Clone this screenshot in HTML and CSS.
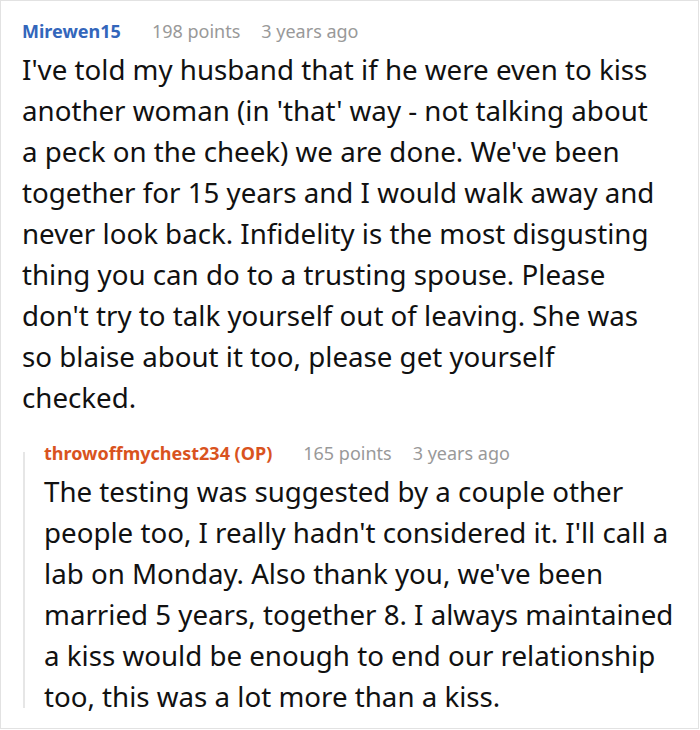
FILE: index.html
```html
<!DOCTYPE html>
<html>
<head>
<meta charset="utf-8">
<link rel="stylesheet" href="styles.css">
</head>
<body>
<div class="card">
  <div class="comment">
    <div class="meta">
      <span class="author">Mirewen15</span>
      <span class="points">198 points</span>
      <span class="time">3 years ago</span>
    </div>
    <p class="text">I've told my husband that if he were even to kiss another woman (in 'that' way - not talking about<br>a peck on the cheek) we are done. We've been together for 15 years and I would walk away and never look back. Infidelity is the most disgusting thing you can do to a trusting spouse. Please don't try to talk yourself out of leaving. She was<br>so blaise about it too, please get yourself<br>checked.</p>
    <div class="reply">
      <div class="rail"></div>
      <div class="reply-body">
        <div class="meta">
          <span class="author op">throwoffmychest234 (OP)</span>
          <span class="points">165 points</span>
          <span class="time">3 years ago</span>
        </div>
        <p class="text">The testing was suggested by a couple other people too, I really hadn't considered it. I'll call a lab on Monday. Also thank you, we've been married 5 years, together 8. I always maintained a kiss would be enough to end our relationship too, this was a lot more than a kiss.</p>
      </div>
    </div>
  </div>
</div>
</body>
</html>
```
FILE: styles.css
```css
html, body {
  margin: 0;
  padding: 0;
  background: #fff;
}
.card {
  box-sizing: border-box;
  width: 699px;
  height: 729px;
  border: 1px solid #e2e2e2;
  overflow: hidden;
  font-family: "Noto Sans", sans-serif;
}
.comment {
  padding: 17px 19px 0 21px;
}
.meta {
  display: flex;
  align-items: baseline;
  font-size: 18px;
  line-height: 26px;
  color: #999;
}
.author {
  font-weight: bold;
  color: #3366bb;
  margin-right: 31px;
}
.author.op {
  color: #d9531e;
}
.points {
  margin-right: 21px;
}
.text {
  margin: 5px 0 0;
  font-size: 27.7px;
  line-height: 41px;
  color: #111;
}
.reply {
  display: flex;
  margin-top: 22px;
}
.rail {
  flex: 0 0 2px;
  margin: 12px 19px 9px 1px;
  background: #e6e6e6;
}
.reply-body {
  flex: 1;
  min-width: 0;
}
```
